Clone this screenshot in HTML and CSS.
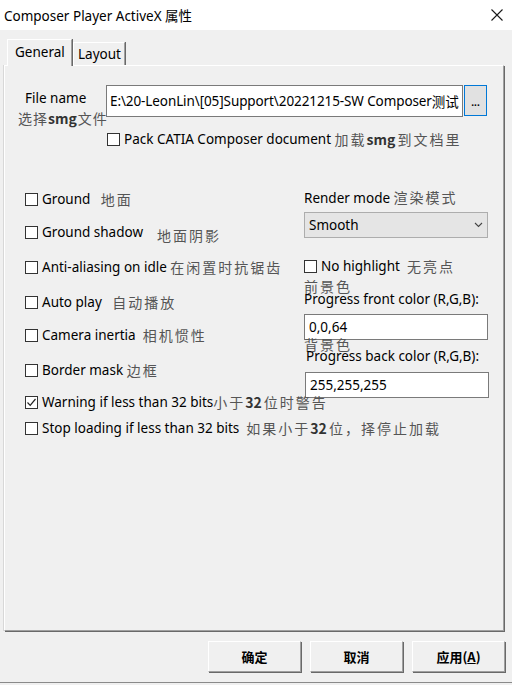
FILE: index.html
```html
<!DOCTYPE html>
<html>
<head>
<meta charset="utf-8">
<link rel="stylesheet" href="styles.css">
</head>
<body>
<div class="titlebar">
  <span class="title">Composer Player ActiveX 属性</span>
  <svg class="close" width="12" height="12" viewBox="0 0 12 12"><path d="M0.5 0.5 L11.5 11.5 M11.5 0.5 L0.5 11.5" stroke="#1a1a1a" stroke-width="1.1" fill="none"/></svg>
</div>
<div class="tabs">
  <div class="tab tab-general active">General</div>
  <div class="tab tab-layout">Layout</div>
</div>
<div class="panel">
  <div class="file-row">
    <span class="file-label">File name</span>
    <div class="textbox file-box">E:\20-LeonLin\[05]Support\20221215-SW Composer<span class="cnb">测试</span></div>
    <div class="browse">...</div>
  </div>
  <div class="hint cn">选择<b>smg</b>文件</div>
  <div class="check-row pack-row"><span class="box"></span>Pack CATIA Composer document&nbsp;<span class="cn">加载<b>smg</b>到文档里</span></div>

  <div class="columns">
    <div class="left">
      <div class="check-row r1"><span class="box"></span>Ground&nbsp;&nbsp;&nbsp;<span class="cn">地面</span></div>
      <div class="check-row r2"><span class="box"></span>Ground shadow&nbsp;&nbsp;&nbsp;&nbsp;<span class="cn low">地面阴影</span></div>
      <div class="check-row r3"><span class="box"></span>Anti-aliasing on idle&nbsp;<span class="cn">在闲置时抗锯齿</span></div>
      <div class="check-row r4"><span class="box"></span>Auto play&nbsp;&nbsp;&nbsp;<span class="cn">自动播放</span></div>
      <div class="check-row r5"><span class="box"></span>Camera inertia&nbsp;&nbsp;<span class="cn">相机惯性</span></div>
      <div class="check-row r6"><span class="box"></span>Border mask&nbsp;<span class="cn">边框</span></div>
      <div class="check-row r7"><span class="box checked"><svg width="11" height="11" viewBox="0 0 11 11"><path d="M1.5 5.5 L4.2 8.3 L9.5 2" stroke="#222" stroke-width="1.2" fill="none"/></svg></span>Warning if less than 32 bits<span class="cn">小于<b>32</b>位时警告</span></div>
      <div class="check-row r8"><span class="box"></span>Stop loading if less than 32 bits&nbsp;&nbsp;<span class="cn">如果小于<b>32</b>位，择停止加载</span></div>
    </div>
    <div class="right">
      <div class="line">Render mode <span class="cn">渲染模式</span></div>
      <div class="select"><span>Smooth</span><svg width="9" height="6" viewBox="0 0 9 6"><path d="M1 1 L4.5 4.5 L8 1" stroke="#444" stroke-width="1.1" fill="none"/></svg></div>
      <div class="check-row nohl"><span class="box"></span>No highlight&nbsp;&nbsp;<span class="cn">无亮点</span></div>
      <div class="line cn fg">前景色</div>
      <div class="line pf">Progress front color (R,G,B):</div>
      <div class="textbox small-box front-box">0,0,64</div>
      <div class="line cn bg">背景色</div>
      <div class="line pb">Progress back color (R,G,B):</div>
      <div class="textbox small-box back-box">255,255,255</div>
    </div>
  </div>
</div>
<div class="buttons">
  <div class="btn">确定</div>
  <div class="btn">取消</div>
  <div class="btn">应用(<u>A</u>)</div>
</div>
<div class="bottom-line"></div>
</body>
</html>
```
FILE: styles.css
```css
* { box-sizing: border-box; }
body {
  margin: 0;
  width: 512px;
  height: 685px;
  overflow: hidden;
  background: #f0f0f0;
  font-family: "Noto Sans", "Noto Sans CJK SC", sans-serif;
  font-size: 13.5px;
  color: #000;
}
.titlebar {
  height: 30px;
  background: #fff;
  display: flex;
  align-items: center;
  justify-content: space-between;
  padding: 0 9px 0 4px;
}
.title { font-size: 13.5px; }
.close { display: block; }

.tabs {
  display: flex;
  align-items: flex-end;
  height: 26px;
  margin: 9px 0 0 7px;
  position: relative;
  z-index: 1;
}
.tab {
  height: 23px;
  border-top: 1px solid #fff;
  border-left: 1px solid #fff;
  border-right: 1px solid #a0a0a0;
  box-shadow: 1px 0 0 #696969;
  line-height: 22px;
  padding-left: 4px;
}
.tab-general { width: 65px; height: 27px; margin-bottom: -1px; background: #f0f0f0; padding-left: 7px; line-height: 24px; }
.tab-layout { width: 52px; margin-left: 1px; }

.panel {
  margin-left: 4px;
  width: 500px;
  height: 566px;
  border-top: 1px solid #fff;
  border-left: 1px solid #fff;
  border-right: 1px solid #a0a0a0;
  border-bottom: 1px solid #a0a0a0;
  box-shadow: 1px 1px 0 #696969, -1px 0 0 #d8d8d8;
  padding: 19px 0 0 20px;
}

.cn {
  font-family: "Noto Sans CJK SC", sans-serif;
  font-size: 14px;
  letter-spacing: 2px;
  color: #555;
}
.cn b { color: #333; letter-spacing: 0; margin-right: 2px; }
.cnb { font-family: "Noto Sans CJK SC", sans-serif; }

.file-row { display: flex; height: 32px; }
.file-label { width: 81px; padding-top: 4px; }
.textbox {
  background: #fff;
  border: 1px solid #7a7a7a;
  padding-left: 4px;
  display: flex;
  align-items: center;
  white-space: nowrap;
  overflow: hidden;
}
.file-box { width: 357px; height: 32px; padding-left: 3px; letter-spacing: -0.1px; }
.browse {
  width: 23px;
  height: 31px;
  margin-left: 1px;
  border: 1px solid #0078d7;
  background: #e1e1e1;
  font-size: 10px;
  font-weight: bold;
  line-height: 1;
  display: flex;
  align-items: center;
  justify-content: center;
  padding-top: 3px;
}
.hint { margin: -8px 0 0 -7px; line-height: 18px; letter-spacing: 1px; }
.hint b { margin-right: 1px; }
.pack-row { margin: 3px 0 0 82px; }

.check-row { display: flex; align-items: center; height: 18px; white-space: nowrap; }
.box {
  width: 13px;
  height: 13px;
  border: 1px solid #333;
  background: #fff;
  margin-right: 4px;
  flex: none;
  display: flex;
  align-items: center;
  justify-content: center;
}
.low { position: relative; top: 3px; }

.columns { display: flex; margin-top: 42px; }
.left { width: 279px; flex: none; position: relative; z-index: 1; }
.right { width: 186px; flex: none; margin-top: -2px; }
.r2 { margin-top: 15px; }
.r3 { margin-top: 17px; }
.r4 { margin-top: 17px; }
.r5 { margin-top: 15px; }
.r6 { margin-top: 17px; }
.r7 { margin-top: 14px; }
.r8 { margin-top: 8px; }

.line { line-height: 18px; white-space: nowrap; }
.select {
  margin-top: 5px;
  width: 184px;
  height: 26px;
  background: #e5e5e5;
  border: 1px solid #adadad;
  display: flex;
  align-items: center;
  justify-content: space-between;
  padding: 0 4px 0 4px;
}
.nohl { margin-top: 19px; }
.fg { margin-top: 2px; }
.pf { margin-top: -5px; }
.small-box { width: 184px; height: 26px; }
.front-box { margin-top: 6px; }
.bg { margin-top: -5px; }
.pb { margin-top: -6px; padding-left: 2px; }
.back-box { margin-top: 7px; margin-left: 1px; height: 26px; }

.buttons {
  display: flex;
  justify-content: flex-end;
  gap: 9px;
  padding: 10px 7px 0 0;
}
.btn {
  width: 93px;
  height: 31px;
  border-top: 1px solid #fff;
  border-left: 1px solid #fff;
  border-right: 1px solid #a0a0a0;
  border-bottom: 1px solid #a0a0a0;
  box-shadow: 1px 1px 0 #696969;
  display: flex;
  align-items: center;
  justify-content: center;
  font-family: "Noto Sans CJK SC", sans-serif;
  font-size: 13px;
  font-weight: 600;
}
.btn u { text-decoration: underline; }
.bottom-line { margin-top: 10px; height: 1px; background: #8a8a8a; }
```
